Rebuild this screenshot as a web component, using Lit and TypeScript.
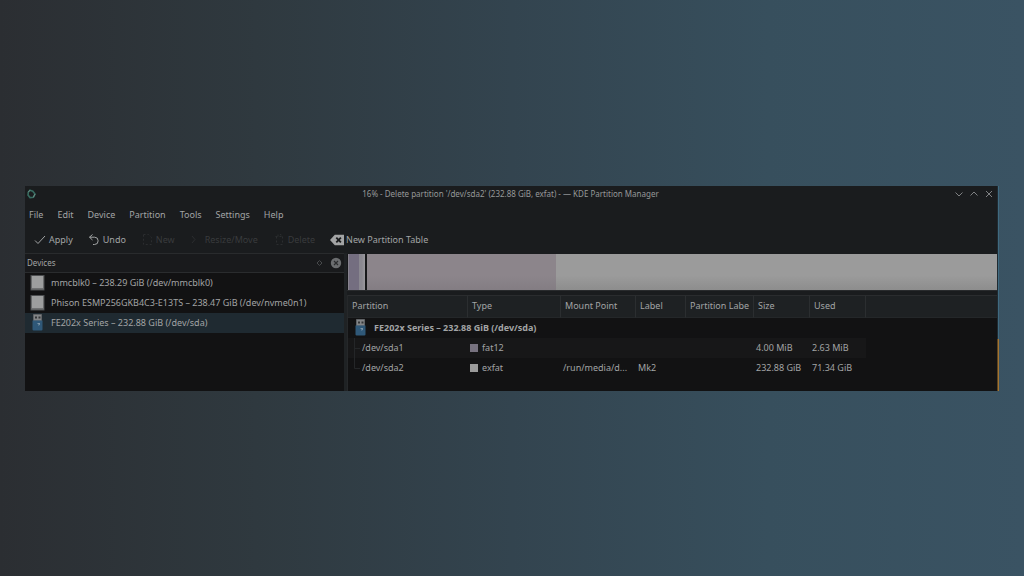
import { LitElement, html, css, svg, nothing } from "lit";
import { customElement, state } from "lit/decorators.js";
import { classMap } from "lit/directives/class-map.js";

interface Tool {
  label: string;
  icon: string;
  disabled?: boolean;
}

interface Device {
  name: string;
  kind: "disk" | "usb";
}

interface Partition {
  path: string;
  type: string;
  mount: string;
  label: string;
  partLabel: string;
  size: string;
  used: string;
}

const MENUS = ["File", "Edit", "Device", "Partition", "Tools", "Settings", "Help"];

const TOOLS: Tool[] = [
  { label: "Apply", icon: "check" },
  { label: "Undo", icon: "undo" },
  { label: "New", icon: "new", disabled: true },
  { label: "Resize/Move", icon: "resize", disabled: true },
  { label: "Delete", icon: "trash", disabled: true },
  { label: "New Partition Table", icon: "clear" },
];

const DEVICES: Device[] = [
  { name: "mmcblk0 – 238.29 GiB (/dev/mmcblk0)", kind: "disk" },
  { name: "Phison ESMP256GKB4C3-E13TS – 238.47 GiB (/dev/nvme0n1)", kind: "disk" },
  { name: "FE202x Series – 232.88 GiB (/dev/sda)", kind: "usb" },
];

const COLUMNS = [
  { key: "partition", title: "Partition" },
  { key: "type", title: "Type" },
  { key: "mount", title: "Mount Point" },
  { key: "label", title: "Label" },
  { key: "plabel", title: "Partition Labe" },
  { key: "size", title: "Size" },
  { key: "used", title: "Used" },
];

const PARTITIONS: Partition[] = [
  { path: "/dev/sda1", type: "fat12", mount: "", label: "", partLabel: "", size: "4.00 MiB", used: "2.63 MiB" },
  { path: "/dev/sda2", type: "exfat", mount: "/run/media/d...", label: "Mk2", partLabel: "", size: "232.88 GiB", used: "71.34 GiB" },
];

const toolGlyphs: Record<string, unknown> = {
  check: svg`<path d="M1 7.5 4 10.5 11 3" />`,
  undo: svg`<path d="M4.5 1.5 1.5 4.2 4.5 7M1.5 4.2h5a3.6 3.6 0 0 1 0 7.3H5" />`,
  new: svg`<path d="M2.5 1.5h5l3 3v7h-8z" stroke-dasharray="2 2" stroke="#2b2d2f" />`,
  resize: svg`<path d="M2 3l3 3.5L2 10" stroke="#2b2d2f" />`,
  trash: svg`<path d="M2.5 3.5h8M3.5 3.5v8h6v-8M5 3.5v-2h3v2" stroke-dasharray="2 2" stroke="#2b2d2f" />`,
};

@customElement("app-root")
export class AppRoot extends LitElement {
  @state() private selected = 2;

  static styles = css`
    :host {
      display: flex;
      align-items: center;
      box-sizing: border-box;
      min-height: 100vh;
      padding: 0 25px;
      background: linear-gradient(90deg, #2b2e32 0%, #2f393f 25%, #33444f 50%, #374f5d 75%, #3a5363 100%);
      font: 9px/20px "Noto Sans", sans-serif;
      color: #a2a4a5;
    }
    button {
      margin: 0;
      padding: 0;
      border: 0;
      background: none;
      color: inherit;
      font: inherit;
      text-align: left;
      white-space: nowrap;
    }
    svg {
      display: block;
      flex: none;
      fill: none;
      stroke: currentColor;
    }
    .frame {
      display: flex;
      flex: 1;
      min-width: 0;
    }
    .window {
      flex: 1;
      min-width: 0;
      background: #1a1c1e;
    }
    .edge {
      display: flex;
      flex-direction: column;
      width: 2px;
    }
    .edge-cool {
      flex: 3;
      background: linear-gradient(90deg, #202a31 50%, #3f6a80 50%);
    }
    .edge-warm {
      flex: 1;
      background: linear-gradient(90deg, #5b4524 50%, #a5742f 50%);
    }
    .titlebar {
      display: grid;
      grid-template-columns: 44px 1fr 44px;
      align-items: center;
      height: 16px;
      padding: 0 3px 0 2px;
    }
    .title {
      margin: 0;
      font-size: 8px;
      line-height: 16px;
      font-weight: 400;
      text-align: center;
      white-space: nowrap;
      color: #969899;
    }
    .controls {
      display: flex;
      justify-content: flex-end;
      gap: 5px;
      color: #7f8183;
    }
    .menubar {
      display: flex;
      gap: 14px;
      padding: 3px 4px;
    }
    .toolbar {
      display: flex;
      align-items: center;
      gap: 15px;
      padding: 2px 9px 3px;
    }
    .tool {
      display: flex;
      align-items: center;
      gap: 2px;
    }
    .tool:disabled {
      color: #393b3d;
    }
    .body {
      display: grid;
      grid-template-columns: 319px minmax(0, 1fr);
      gap: 3px;
      background: #1f2224;
    }
    .dock {
      display: flex;
      flex-direction: column;
      background: #121213;
      border-top: 1px solid #292b2d;
    }
    .dock-head {
      display: flex;
      align-items: center;
      gap: 6px;
      padding: 0 2px;
      background: #191a1c;
      border-bottom: 1px solid #2a2c2e;
      font-size: 8px;
      line-height: 18px;
    }
    .dock-title {
      flex: 1;
      margin: 0;
      font: inherit;
    }
    .devices {
      display: flex;
      flex-direction: column;
    }
    .device {
      display: flex;
      align-items: center;
      gap: 6px;
      padding: 0 5px;
    }
    .device.selected {
      background: #1f2a31;
    }
    .main {
      display: flex;
      flex-direction: column;
      background: #1a1c1e;
      min-width: 0;
    }
    .bar {
      display: flex;
      gap: 2px;
      height: 36px;
      margin-top: 1px;
      padding-left: 1px;
      background: #17181a;
      border-bottom: 1px solid #292b2d;
    }
    .slot {
      display: flex;
      background: linear-gradient(#9b9b9b 60%, #8d8d8d);
    }
    .slot.small {
      box-sizing: border-box;
      width: 17px;
      border-left: 1px solid #87838e;
      background: linear-gradient(90deg, #8a8890 80%, #9a999d);
    }
    .slot.large {
      flex: 1;
    }
    .fill {
      width: 30%;
      background: linear-gradient(#8c858b 60%, #837d83);
    }
    .small .fill {
      width: 60%;
      background: #746e80;
    }
    .table-wrap {
      flex: 1;
      margin-top: 4px;
      padding-bottom: 13px;
      background: #121213;
      border-left: 1px solid #26282a;
    }
    table {
      width: 100%;
      border-collapse: separate;
      border-spacing: 0;
      table-layout: fixed;
    }
    th,
    td {
      box-sizing: border-box;
      height: 20px;
      padding: 0 0 0 2px;
      font-weight: 400;
      text-align: left;
      white-space: nowrap;
    }
    th {
      height: 23px;
      padding-left: 4px;
      background: #1e2123;
      border-right: 1px solid #2b2e30;
      border-top: 1px solid #2a2c2e;
      border-bottom: 1px solid #242729;
    }
    th:last-child {
      border-right: 0;
    }
    .partition { width: 120px; }
    .type { width: 93px; }
    .mount { width: 75px; }
    .label { width: 50px; }
    .plabel { width: 68px; }
    .size { width: 56px; }
    .used { width: 56px; }
    .striped td:not(:last-child) {
      background: #171718;
    }
    .group {
      display: flex;
      align-items: center;
      gap: 6px;
      padding-left: 3px;
      font-weight: 700;
    }
    .branch {
      display: flex;
      align-items: center;
      color: #242628;
    }
    .path {
      color: #a2a4a5;
    }
    .fs {
      display: flex;
      align-items: center;
      gap: 4px;
    }
    .swatch {
      width: 8px;
      height: 8px;
      background: #9a9a9a;
    }
    .swatch.fat12 {
      background: #77727f;
    }
  `;

  private deviceIcon(kind: Device["kind"]) {
    return kind === "disk"
      ? html`<svg width="15" height="16" viewBox="0 0 15 16" aria-hidden="true">
          <rect x="1" y="0.5" width="13" height="14.5" fill="#858686" stroke="#4c4e50" />
          <rect x="2" y="1" width="11" height="12" fill="#9d9e9e" stroke="none" />
          <path d="M2 14h11" stroke="#5a5c5e" />
        </svg>`
      : html`<svg width="15" height="17" viewBox="0 0 15 17" aria-hidden="true">
          <path d="M3.5 0.5h8V7h-8z" fill="#828486" stroke="#606366" />
          <path d="M5 2.5h2v2H5zM8.5 2.5h2v2h-2z" fill="#343638" stroke="none" />
          <path d="M2.5 6.5h10v9a1 1 0 0 1-1 1h-8a1 1 0 0 1-1-1z" fill="#2f5878" stroke="none" />
          <path d="M8 9h2v1.5L8.5 12V10H7z" fill="#7d95a8" stroke="none" />
        </svg>`;
  }

  private toolIcon(name: string) {
    if (name === "clear") {
      return html`<svg width="14" height="12" viewBox="0 0 14 12" aria-hidden="true">
        <path d="M4.8 0.8H14v10.4H4.8L0 6z" fill="#a3a4a5" stroke="none" />
        <path d="M6.3 3.6l4.6 4.8M10.9 3.6 6.3 8.4" stroke="#1a1c1e" stroke-width="1.8" />
      </svg>`;
    }
    return html`<svg width="13" height="13" viewBox="0 0 13 13" aria-hidden="true">${toolGlyphs[name]}</svg>`;
  }

  private branch(last: boolean) {
    return html`<svg width="12" height="20" viewBox="0 0 12 20" aria-hidden="true">
      <path d=${last ? "M4.5 0V10.5H10" : "M4.5 0V20M4.5 10.5H10"} />
    </svg>`;
  }

  render() {
    return html`
      <div class="frame">
        <section class="window">
          <header class="titlebar">
            <svg width="9" height="10" viewBox="0 0 9 10" aria-hidden="true">
              <path d="M3 1.2 5.8 2.2 8 5 6.4 8.2 3 8.6 1 6 1.4 3z" stroke="#376b60" stroke-width="1.6" />
              <path d="M3.2 1 1.2 3.2M8 5 6.4 8.2" stroke="#6a8f86" />
            </svg>
            <h1 class="title">16% - Delete partition '/dev/sda2' (232.88 GiB, exfat) - — KDE Partition Manager</h1>
            <div class="controls">
              <button aria-label="Minimize"><svg width="10" height="10" viewBox="0 0 10 10"><path d="M1.5 3.5 5 7l3.5-3.5" /></svg></button>
              <button aria-label="Maximize"><svg width="10" height="10" viewBox="0 0 10 10"><path d="M1.5 6.5 5 3l3.5 3.5" /></svg></button>
              <button aria-label="Close"><svg width="10" height="10" viewBox="0 0 10 10"><path d="M2 2l6 6M8 2 2 8" /></svg></button>
            </div>
          </header>
          <nav class="menubar">${MENUS.map((m) => html`<button>${m}</button>`)}</nav>
          <div class="toolbar">
            ${TOOLS.map(
              (t) => html`<button class="tool" ?disabled=${t.disabled ?? false}>${this.toolIcon(t.icon)}<span>${t.label}</span></button>`
            )}
          </div>
          <div class="body">
            <aside class="dock">
              <div class="dock-head">
                <h2 class="dock-title">Devices</h2>
                <button aria-label="Float panel">
                  <svg width="9" height="12" viewBox="0 0 9 12"><path d="M4.5 3.5 7 6 4.5 8.5 2 6z" stroke="#47494b" /></svg>
                </button>
                <button aria-label="Close panel">
                  <svg width="12" height="12" viewBox="0 0 12 12">
                    <circle cx="6" cy="6" r="5.2" fill="#6b6d6f" stroke="none" />
                    <path d="M4 4l4 4M8 4 4 8" stroke="#2c2d2f" stroke-width="1.2" />
                  </svg>
                </button>
              </div>
              <div class="devices">
                ${DEVICES.map(
                  (d, i) => html`<button
                    class=${classMap({ device: true, selected: i === this.selected })}
                    @click=${() => (this.selected = i)}
                  >${this.deviceIcon(d.kind)}<span>${d.name}</span></button>`
                )}
              </div>
            </aside>
            <main class="main">
              <div class="bar">
                <div class="slot small"><div class="fill"></div></div>
                <div class="slot large"><div class="fill"></div></div>
              </div>
              <div class="table-wrap">
                <table>
                  <thead>
                    <tr>${COLUMNS.map((c) => html`<th class=${c.key} scope="col">${c.title}</th>`)}<th></th></tr>
                  </thead>
                  <tbody>
                    <tr>
                      <td colspan="8"><div class="group">${this.deviceIcon("usb")}<span>${DEVICES[2].name}</span></div></td>
                    </tr>
                    ${PARTITIONS.map(
                      (p, i) => html`<tr class=${i === 0 ? "striped" : nothing}>
                        <td><div class="branch">${this.branch(i === PARTITIONS.length - 1)}<span class="path">${p.path}</span></div></td>
                        <td><div class="fs"><span class="swatch ${p.type}"></span>${p.type}</div></td>
                        <td>${p.mount}</td>
                        <td>${p.label}</td>
                        <td>${p.partLabel}</td>
                        <td>${p.size}</td>
                        <td>${p.used}</td>
                        <td></td>
                      </tr>`
                    )}
                  </tbody>
                </table>
              </div>
            </main>
          </div>
        </section>
        <div class="edge"><div class="edge-cool"></div><div class="edge-warm"></div></div>
      </div>
    `;
  }
}
